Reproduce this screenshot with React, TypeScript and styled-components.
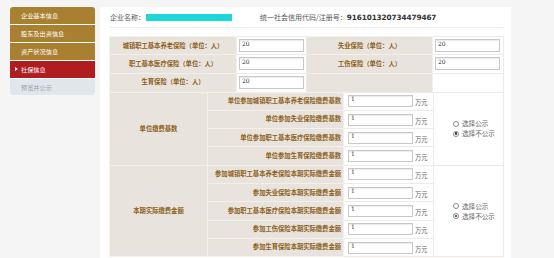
import React from 'react';
import styled, { createGlobalStyle, css } from 'styled-components';

const Global = createGlobalStyle`
  html, body { margin: 0; padding: 0; background: #f5f5f5; }
  body { font-family: "Noto Sans CJK SC", "Noto Sans", sans-serif; }
  * { box-sizing: border-box; }
`;

const Page = styled.div`
  display: flex;
  align-items: flex-start;
  gap: 5px;
  padding: 7px 0 0 10px;
  width: 554px;
  height: 258px;
  overflow: hidden;
`;

const Sidebar = styled.nav`
  width: 85px;
  display: flex;
  flex-direction: column;
  gap: 1px;
  border-radius: 3px;
  overflow: hidden;
  background: #fff;
`;

type Variant = 'gold' | 'active' | 'muted';

const NavItem = styled.div<{ $variant: Variant }>`
  position: relative;
  height: 17px;
  display: flex;
  align-items: center;
  padding-left: 11px;
  font-size: 6.2px;
  color: #fff;
  background: #a98030;
  ${(p) =>
    p.$variant === 'active' &&
    css`
      background: #b01d21;
    `}
  ${(p) =>
    p.$variant === 'muted' &&
    css`
      background: #e1e5ec;
      color: #9aa0a8;
      height: 16px;
    `}
`;

const Caret = styled.span`
  position: absolute;
  left: 5px;
  top: 50%;
  margin-top: -2.5px;
  width: 0;
  height: 0;
  border-top: 2.5px solid transparent;
  border-bottom: 2.5px solid transparent;
  border-left: 3px solid #fff;
`;

const Panel = styled.main`
  width: 411px;
  height: 260px;
  background: #fff;
  padding: 0 8px 0 9px;
`;

const Header = styled.div`
  height: 21px;
  display: flex;
  align-items: center;
  border-bottom: 1px solid #eeeeee;
  font-size: 7px;
  color: #555;
  padding-left: 1px;
`;

const Redacted = styled.span`
  display: inline-block;
  width: 86px;
  height: 7px;
  background: #1cd6d8;
  margin-left: 1px;
`;

const CodeLabel = styled.span`
  margin-left: 28px;
`;

const CodeValue = styled.span`
  font-family: "DejaVu Sans", sans-serif;
  font-weight: bold;
  font-size: 7.3px;
  color: #333;
  letter-spacing: -0.1px;
`;

const Table = styled.table<{ $first?: boolean }>`
  width: 394px;
  border-collapse: collapse;
  table-layout: fixed;
  font-size: 6px;
  line-height: 1;
  margin-top: ${(p) => (p.$first ? '8px' : '-1px')};
`;

const Row = styled.tr<{ $h?: number }>`
  height: ${(p) => p.$h ?? 18.3}px;
`;

const Label = styled.td<{ $align?: 'center' | 'right' }>`
  background: #e9e3dd;
  color: #8d6120;
  font-weight: bold;
  font-size: 6.3px;
  text-align: ${(p) => p.$align ?? 'center'};
  padding: 0 ${(p) => (p.$align === 'right' ? '2px' : '0')} 0 0;
  border: 1px solid #f3efeb;
  white-space: nowrap;
  overflow: hidden;
  line-height: 1;
`;

const Value = styled.td<{ $pad?: number }>`
  background: #fff;
  border: 1px solid #efeae6;
  padding: 0 0 0 ${(p) => p.$pad ?? 2}px;
  vertical-align: middle;
  line-height: 0;
`;

const Field = styled.input<{ $h?: number }>`
  display: block;
  width: 65px;
  height: ${(p) => p.$h ?? 13}px;
  border: 1px solid #c8c8c8;
  box-shadow: inset 0 1px 1px rgba(0, 0, 0, 0.08);
  padding: 0 2px 5px;
  font-size: 6px;
  line-height: 6px;
  font-family: "DejaVu Serif", serif;
  color: #333;
  background: #fff;
  outline: none;
  margin: 0;
`;

const FieldWrap = styled.div`
  display: flex;
  align-items: center;
  gap: 2px;
`;

const Unit = styled.span`
  font-size: 6.3px;
  line-height: 7px;
  color: #666;
  padding-top: 3px;
`;

const RadioCell = styled.td`
  background: #fff;
  border: 1px solid #efeae6;
  padding-left: 19px;
  vertical-align: middle;
`;

const RadioGroup = styled.div`
  display: flex;
  flex-direction: column;
  gap: 3px;
`;

const RadioOpt = styled.label`
  display: flex;
  align-items: center;
  gap: 3px;
  font-size: 6.6px;
  color: #666;
  line-height: 7px;
`;

const Dot = styled.span<{ $on?: boolean }>`
  width: 6px;
  height: 6px;
  border-radius: 50%;
  border: 1px solid #8a8a8a;
  background: #fff;
  display: inline-flex;
  align-items: center;
  justify-content: center;
  &::after {
    content: '';
    width: 2.5px;
    height: 2.5px;
    border-radius: 50%;
    background: ${(p) => (p.$on ? '#333' : 'transparent')};
  }
`;

const Radios = () => (
  <RadioGroup>
    <RadioOpt>
      <Dot />
      选择公示
    </RadioOpt>
    <RadioOpt>
      <Dot $on />
      选择不公示
    </RadioOpt>
  </RadioGroup>
);

const MoneyInput = () => (
  <FieldWrap>
    <Field $h={12} defaultValue="1" readOnly />
    <Unit>万元</Unit>
  </FieldWrap>
);

const baseRows = [
  '单位参加城镇职工基本养老保险缴费基数',
  '单位参加失业保险缴费基数',
  '单位参加职工基本医疗保险缴费基数',
  '单位参加生育保险缴费基数',
];

const paidRows = [
  '参加城镇职工基本养老保险本期实际缴费金额',
  '参加失业保险本期实际缴费金额',
  '参加职工基本医疗保险本期实际缴费金额',
  '参加工伤保险本期实际缴费金额',
  '参加生育保险本期实际缴费金额',
];

export default function App() {
  return (
    <>
      <Global />
      <Page>
        <Sidebar>
          <NavItem $variant="gold">企业基本信息</NavItem>
          <NavItem $variant="gold">股东及出资信息</NavItem>
          <NavItem $variant="gold">资产状况信息</NavItem>
          <NavItem $variant="active">
            <Caret />
            社保信息
          </NavItem>
          <NavItem $variant="muted">预览并公示</NavItem>
        </Sidebar>
        <Panel>
          <Header>
            企业名称：
            <Redacted />
            <CodeLabel>统一社会信用代码/注册号：</CodeLabel>
            <CodeValue>916101320734479467</CodeValue>
          </Header>
          <Table $first>
            <colgroup>
              <col style={{ width: 127 }} />
              <col style={{ width: 70 }} />
              <col style={{ width: 126 }} />
              <col style={{ width: 71 }} />
            </colgroup>
            <tbody>
              <Row>
                <Label>城镇职工基本养老保险（单位：人）</Label>
                <Value>
                  <Field defaultValue="20" readOnly />
                </Value>
                <Label>失业保险（单位：人）</Label>
                <Value>
                  <Field defaultValue="20" readOnly />
                </Value>
              </Row>
              <Row>
                <Label>职工基本医疗保险（单位：人）</Label>
                <Value>
                  <Field defaultValue="20" readOnly />
                </Value>
                <Label>工伤保险（单位：人）</Label>
                <Value>
                  <Field defaultValue="20" readOnly />
                </Value>
              </Row>
              <Row $h={19}>
                <Label>生育保险（单位：人）</Label>
                <Value>
                  <Field defaultValue="20" readOnly />
                </Value>
                <Label />
                <Value />
              </Row>
            </tbody>
          </Table>
          <Table>
            <colgroup>
              <col style={{ width: 98 }} />
              <col style={{ width: 136 }} />
              <col style={{ width: 90 }} />
              <col style={{ width: 70 }} />
            </colgroup>
            <tbody>
              {baseRows.map((t, i) => (
                <Row key={t}>
                  {i === 0 && <Label rowSpan={baseRows.length}>单位缴费基数</Label>}
                  <Label $align="right">{t}</Label>
                  <Value $pad={4}>
                    <MoneyInput />
                  </Value>
                  {i === 0 && (
                    <RadioCell rowSpan={baseRows.length}>
                      <Radios />
                    </RadioCell>
                  )}
                </Row>
              ))}
              {paidRows.map((t, i) => (
                <Row key={t}>
                  {i === 0 && <Label rowSpan={paidRows.length}>本期实际缴费金额</Label>}
                  <Label $align="right">{t}</Label>
                  <Value $pad={4}>
                    <MoneyInput />
                  </Value>
                  {i === 0 && (
                    <RadioCell rowSpan={paidRows.length}>
                      <Radios />
                    </RadioCell>
                  )}
                </Row>
              ))}
            </tbody>
          </Table>
        </Panel>
      </Page>
    </>
  );
}
